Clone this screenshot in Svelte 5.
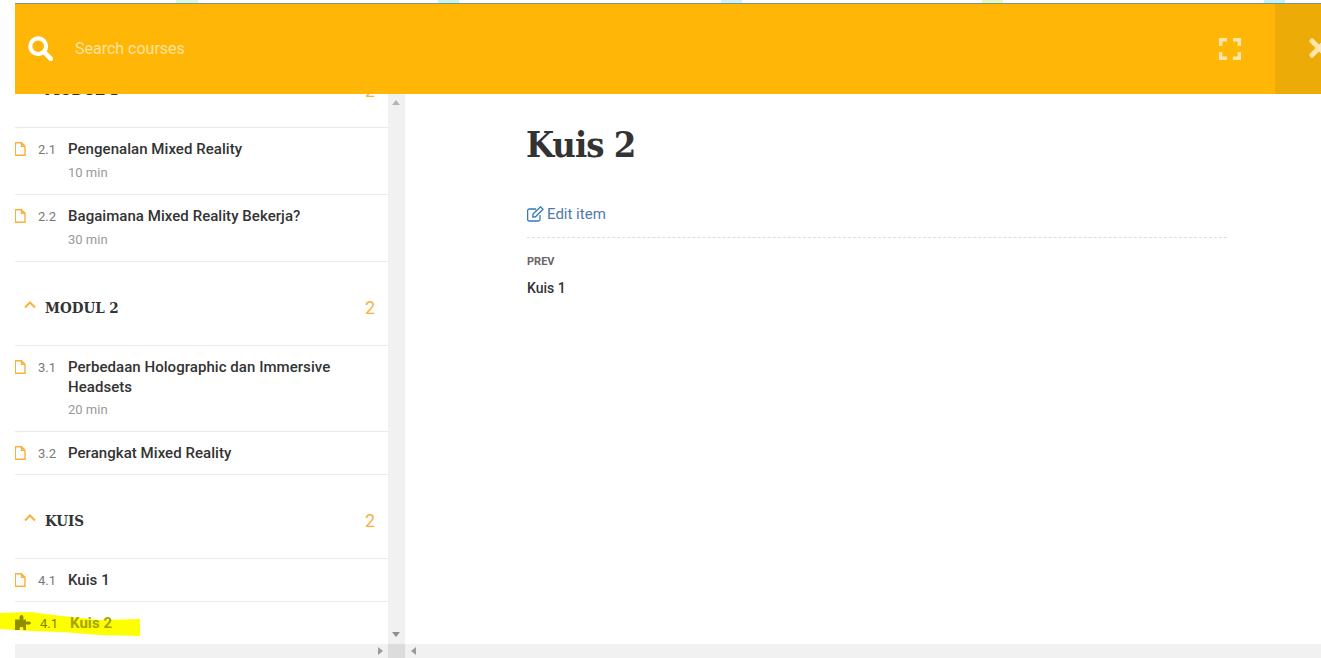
<script>
    const patches = [
        { w: 176, pw: 22, c: '#d8fbe0' },
        { w: 240, pw: 21, c: '#c5f7ea' },
        { w: 262, pw: 21, c: '#cdf2f7' },
        { w: 240, pw: 21, c: '#e4fbc0' },
        { w: 261, pw: 21, c: '#bff5f8' }
    ];

    const sections = [
        {
            name: 'MODUL 1',
            items: [
                { num: '2.1', title: 'Pengenalan Mixed Reality', time: '10 min' },
                { num: '2.2', title: 'Bagaimana Mixed Reality Bekerja?', time: '30 min' }
            ]
        },
        {
            name: 'MODUL 2',
            items: [
                { num: '3.1', title: 'Perbedaan Holographic dan Immersive Headsets', time: '20 min', long: true },
                { num: '3.2', title: 'Perangkat Mixed Reality' }
            ]
        },
        {
            name: 'KUIS',
            items: [{ num: '4.1', title: 'Kuis 1' }]
        }
    ];
</script>

<div class="page">
    <div class="strip">
        {#each patches as p}
            <i style="margin-left: {p.w}px; width: {p.pw}px; background: {p.c}"></i>
        {/each}
    </div>

    <header>
        <svg class="search" viewBox="0 0 24 24" width="25" height="25" aria-hidden="true">
            <circle cx="9.8" cy="9.8" r="7.6" fill="none" stroke="#fff" stroke-width="4" />
            <path d="M15.5 15.5 L22 22" stroke="#fff" stroke-width="4.4" stroke-linecap="round" />
        </svg>
        <span class="placeholder">Search courses</span>
        <svg class="expand" viewBox="0 0 22 22" width="22" height="22" aria-hidden="true">
            <path d="M1.7 8 V1.7 H8 M14 1.7 H20.3 V8 M20.3 14 V20.3 H14 M8 20.3 H1.7 V14" fill="none" stroke="#ffe6ac" stroke-width="3.4" />
        </svg>
        <div class="close">
            <svg viewBox="0 0 22 22" width="22" height="22" aria-hidden="true">
                <path d="M4 3 L18 17 M18 3 L4 17" stroke="#ffe6ac" stroke-width="5" stroke-linecap="round" />
            </svg>
        </div>
    </header>

    <main>
        <aside>
            <div class="list">
                {#each sections as s}
                    <div class="sec-head">
                        <svg class="chev" viewBox="0 0 12 8" width="12" height="8" aria-hidden="true"><path d="M1 6.5 L6 1.5 L11 6.5" fill="none" stroke="#fbb03b" stroke-width="2" /></svg>
                        <h3>{s.name}</h3>
                        <span class="count">2</span>
                    </div>
                    {#each s.items as item}
                        <div class="item" class:long={item.long}>
                            <svg class="file" viewBox="0 0 11 14" width="11" height="14" aria-hidden="true">
                                <path d="M0.3 0.7 H6.5 L10 4.2 V13.3 H0.3 Z M6.5 0.7 V4.2 H10" fill="none" stroke="#fbb03b" stroke-width="1.4" />
                            </svg>
                            <span class="num">{item.num}</span>
                            <div class="text">
                                <div class="title">{item.title}</div>
                                {#if item.time}<div class="time">{item.time}</div>{/if}
                            </div>
                        </div>
                    {/each}
                {/each}
                <div class="item current">
                    <svg class="marker" viewBox="0 0 140 26" width="140" height="26" aria-hidden="true">
                        <path d="M0 1 L30 0 L62 4 L100 8 L140 7 L140 24 L100 23 L62 20 L30 19 L0 17 Z" fill="#fdff00" />
                    </svg>
                    <svg class="puzzle" viewBox="0 0 16 15" width="16" height="15" aria-hidden="true">
                        <path d="M0 4.5 H5 C4 3 4.5 0 6.5 0 C8.5 0 9 3 8 4.5 H11 V7 C12.5 6.1 16 6.5 16 8.1 C16 9.7 12.5 10.1 11 9.2 V15 H8.2 C9 13.5 8 11.8 6.5 11.8 C5 11.8 4 13.5 4.8 15 H0 Z" fill="#8f8e00" />
                    </svg>
                    <span class="num">4.1</span>
                    <div class="text"><div class="title">Kuis 2</div></div>
                </div>
            </div>
            <div class="vbar">
                <svg viewBox="0 0 8 5" width="8" height="5" aria-hidden="true"><path d="M0 5 L4 0 L8 5 Z" fill="#b4b4b4" /></svg>
                <svg viewBox="0 0 8 5" width="8" height="5" aria-hidden="true"><path d="M0 0 L4 5 L8 0 Z" fill="#8f8f8f" /></svg>
            </div>
        </aside>

        <section class="content">
            <h1>Kuis 2</h1>
            <a class="edit" href="#edit">
                <svg viewBox="0 0 17 16" width="17" height="16" aria-hidden="true">
                    <path d="M13 9 V13.2 A1.8 1.8 0 0 1 11.2 15 H2.4 A1.8 1.8 0 0 1 0.6 13.2 V4.8 A1.8 1.8 0 0 1 2.4 3 H9" fill="none" stroke="#337ab7" stroke-width="1.3" />
                    <path d="M6 8 L13.5 0.8 L16 3.3 L8.5 10.8 L5.8 11 Z" fill="none" stroke="#337ab7" stroke-width="1.3" />
                </svg>
                Edit item
            </a>
            <div class="nav">
                <div class="prev">PREV</div>
                <div class="prev-title">Kuis 1</div>
            </div>
        </section>
    </main>

    <footer>
        <div class="track left"><svg viewBox="0 0 5 8" width="5" height="8" aria-hidden="true"><path d="M0 0 L5 4 L0 8 Z" fill="#9a9a9a" /></svg></div>
        <div class="corner"></div>
        <div class="track right"><svg viewBox="0 0 5 8" width="5" height="8" aria-hidden="true"><path d="M5 0 L0 4 L5 8 Z" fill="#9a9a9a" /></svg></div>
    </footer>
</div>

<style>
    :global(body) {
        margin: 0;
        background: #fff;
        overflow: hidden;
    }

    .page {
        width: 1321px;
        height: 658px;
        display: flex;
        flex-direction: column;
        font-family: Roboto, "Liberation Sans", sans-serif;
        color: #333;
        overflow: hidden;
    }

    .strip {
        height: 3px;
        display: flex;
        flex: none;
    }

    .strip i {
        display: block;
        height: 3px;
    }

    header {
        flex: none;
        height: 90px;
        margin-left: 15px;
        background: #ffb606;
        border-top: 1px solid #7f9290;
        display: flex;
        align-items: center;
        position: relative;
        z-index: 2;
    }

    .search {
        margin-left: 13px;
        margin-bottom: 1px;
        flex: none;
    }

    .placeholder {
        margin-left: 22px;
        margin-bottom: 2px;
        font-size: 16px;
        color: #ffe3a0;
    }

    .expand {
        margin-left: auto;
        margin-right: 34px;
    }

    .close {
        width: 46px;
        height: 100%;
        background: #edab07;
        display: flex;
        align-items: center;
        overflow: hidden;
    }

    .close svg {
        margin-left: 33px;
        flex: none;
    }

    main {
        flex: 1;
        min-height: 0;
        display: flex;
    }

    aside {
        flex: none;
        width: 390px;
        margin-left: 15px;
        display: flex;
    }

    .list {
        width: 373px;
        flex: none;
    }

    .sec-head {
        height: 84px;
        padding-top: 8px;
        display: flex;
        align-items: center;
        border-bottom: 1px solid #eaeaea;
        box-sizing: border-box;
    }

    /* first section is scrolled under the search bar */
    .sec-head:first-child {
        margin-top: -50px;
        padding-top: 9px;
    }

    .chev {
        margin-left: 9px;
        margin-top: -6px;
        flex: none;
    }

    h3 {
        margin: 0 0 0 9px;
        font-family: "DejaVu Serif Condensed", "DejaVu Serif", serif;
        font-weight: 700;
        font-size: 15px;
        color: #333;
    }

    .count {
        margin-left: auto;
        margin-right: 13px;
        font-size: 18px;
        color: #fbb03b;
    }

    .item {
        display: flex;
        align-items: flex-start;
        padding: 11px 0;
        border-bottom: 1px solid #eaeaea;
        position: relative;
    }

    .file {
        flex: none;
        margin-top: 3px;
    }

    .num {
        flex: none;
        width: 30px;
        height: 19px;
        margin-left: 12px;
        margin-top: 1px;
        font-size: 13px;
        line-height: 20px;
        color: #777;
    }

    .text {
        flex: 1;
        padding-right: 30px;
    }

    .title {
        font-size: 15px;
        font-weight: 500;
        line-height: 20px;
        letter-spacing: 0.05px;
        color: #333;
    }

    .time {
        margin-top: 6px;
        margin-bottom: 2px;
        font-size: 13px;
        line-height: 16px;
        color: #999;
    }

    .long .time {
        margin-top: 5px;
    }

    .current {
        border-bottom: 0;
    }

    .current .marker {
        position: absolute;
        left: -15px;
        top: 10px;
    }

    .current .puzzle {
        position: relative;
        flex: none;
        margin-top: 2px;
    }

    .current .num {
        position: relative;
        margin-left: 9px;
        color: #7f7e00;
    }

    .current .title {
        position: relative;
        font-weight: 700;
        color: #a5a400;
    }

    .vbar {
        flex: none;
        width: 17px;
        background: #f1f1f1;
        display: flex;
        flex-direction: column;
        justify-content: space-between;
        align-items: center;
        padding: 6px 0 7px;
        box-sizing: border-box;
    }

    .vbar svg {
        margin-right: 1px;
    }

    .content {
        flex: none;
        width: 700px;
        margin-left: 122px;
    }

    h1 {
        margin: 31px 0 0 -1px;
        font-family: "DejaVu Serif Condensed", "DejaVu Serif", serif;
        font-weight: 700;
        font-size: 36px;
        line-height: 38px;
        letter-spacing: -1px;
        color: #333;
    }

    .edit {
        display: inline-flex;
        align-items: center;
        gap: 3px;
        margin-top: 41px;
        font-size: 15px;
        line-height: 20px;
        color: #4f7ba8;
        text-decoration: none;
    }

    .nav {
        margin-top: 11px;
        border-top: 1px dashed #ddd;
        padding-top: 17px;
    }

    .prev {
        font-size: 11px;
        font-weight: 700;
        line-height: 13px;
        color: #666;
    }

    .prev-title {
        margin-top: 12px;
        font-size: 14px;
        font-weight: 500;
        line-height: 16px;
        color: #333;
    }

    footer {
        flex: none;
        height: 14px;
        margin-left: 15px;
        display: flex;
    }

    .track {
        background: #f1f1f1;
        display: flex;
        align-items: center;
    }

    .track.left {
        width: 373px;
        justify-content: flex-end;
        padding-right: 5px;
        box-sizing: border-box;
    }

    .corner {
        width: 17px;
        background: #dcdcdc;
    }

    .track.right {
        flex: 1;
        padding-left: 6px;
    }
</style>
